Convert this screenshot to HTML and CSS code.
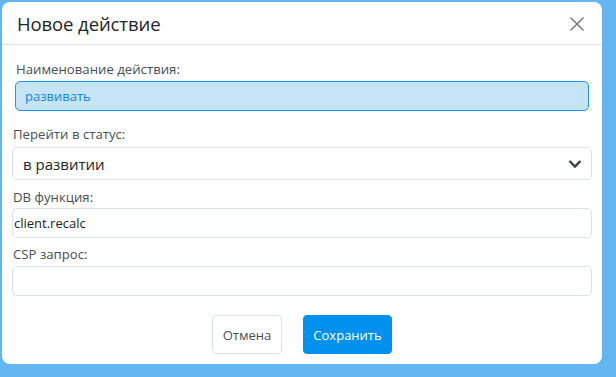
FILE: index.html
```html
<!DOCTYPE html>
<html lang="ru">
<head>
<meta charset="utf-8">
<title>Новое действие</title>
<link rel="stylesheet" href="styles.css">
</head>
<body>
<div class="backdrop">
  <div class="modal">
    <div class="modal-header">
      <h1 class="modal-title">Новое действие</h1>
      <button class="close" aria-label="Закрыть">
        <svg width="16" height="16" viewBox="0 0 16 16"><path d="M1.5 1.5 L14.5 14.5 M14.5 1.5 L1.5 14.5" stroke="#6c757d" stroke-width="1.4" fill="none"/></svg>
      </button>
    </div>
    <div class="modal-body">
      <div class="field field-name">
        <label class="label">Наименование действия:</label>
        <div class="input input-active">развивать</div>
      </div>
      <div class="field field-status">
        <label class="label">Перейти в статус:</label>
        <div class="select">
          <span>в развитии</span>
          <svg width="14" height="10" viewBox="0 0 14 10"><path d="M1.5 2 L7 7.5 L12.5 2" stroke="#3a3f44" stroke-width="2.4" fill="none"/></svg>
        </div>
      </div>
      <div class="field field-db">
        <label class="label">DB функция:</label>
        <div class="input input-plain">client.recalc</div>
      </div>
      <div class="field field-csp">
        <label class="label">CSP запрос:</label>
        <div class="input input-plain"></div>
      </div>
    </div>
    <div class="modal-footer">
      <button class="btn btn-light">Отмена</button>
      <button class="btn btn-primary">Сохранить</button>
    </div>
  </div>
</div>
</body>
</html>
```
FILE: styles.css
```css
html, body {
  margin: 0;
  padding: 0;
  background: #63b6f0;
  font-family: "Open Sans", "Noto Sans", "DejaVu Sans", sans-serif;
}
.backdrop {
  width: 616px;
  height: 377px;
  padding: 2px 14px 0 2px;
  box-sizing: border-box;
}
.modal {
  width: 600px;
  height: 362px;
  background: #fff;
  border-radius: 8px;
  display: flex;
  flex-direction: column;
  overflow: hidden;
}
.modal-header {
  height: 42px;
  border-bottom: 1px solid #d5e3ea;
  display: flex;
  align-items: center;
  justify-content: space-between;
  padding: 0 17px 0 15px;
  flex-shrink: 0;
}
.modal-title {
  margin: 0;
  font-size: 18.5px;
  font-weight: 400;
  color: #212529;
  letter-spacing: -0.1px;
}
.close {
  border: 0;
  background: none;
  padding: 0;
  width: 16px;
  height: 16px;
  display: flex;
  margin-top: 1px;
}
.modal-body {
  padding: 0 10px;
  display: flex;
  flex-direction: column;
}
.field {
  display: flex;
  flex-direction: column;
}
.label {
  font-size: 13.2px;
  color: #4a4f55;
  height: 17px;
  line-height: 17px;
  padding-left: 1px;
}
.field-name .label {
  margin: 16px 0 3px;
  padding-left: 4px;
}
.field-status .label {
  margin: 15px 0 4px;
}
.field-db .label {
  margin: 9px 0 2px;
}
.field-csp .label {
  margin: 8px 0 3px;
}
.input {
  height: 30px;
  box-sizing: border-box;
  border: 1px solid #d9e2e8;
  border-radius: 5px;
  font-size: 13px;
  color: #212529;
  display: flex;
  align-items: center;
}
.input-active {
  margin: 0 3px;
  background: #c6e4f8;
  border-color: #1c93ec;
  color: #0f86e2;
  padding-left: 9px;
}
.input-plain {
  padding-left: 1px;
}
.select {
  height: 33px;
  box-sizing: border-box;
  border: 1px solid #d9e2e8;
  border-radius: 5px;
  font-size: 15px;
  color: #212529;
  display: flex;
  align-items: center;
  justify-content: space-between;
  padding: 0 9px 0 10px;
}
.modal-footer {
  display: flex;
  justify-content: center;
  gap: 21px;
  padding-top: 19px;
}
.btn {
  height: 39px;
  border-radius: 4px;
  font-family: inherit;
  font-size: 13px;
  padding: 0;
}
.btn-light {
  width: 70px;
  background: #fff;
  border: 1px solid #dae3e9;
  color: #4a4f55;
}
.btn-primary {
  width: 89px;
  background: #0091ee;
  border: 1px solid #0091ee;
  color: #fff;
}
```
